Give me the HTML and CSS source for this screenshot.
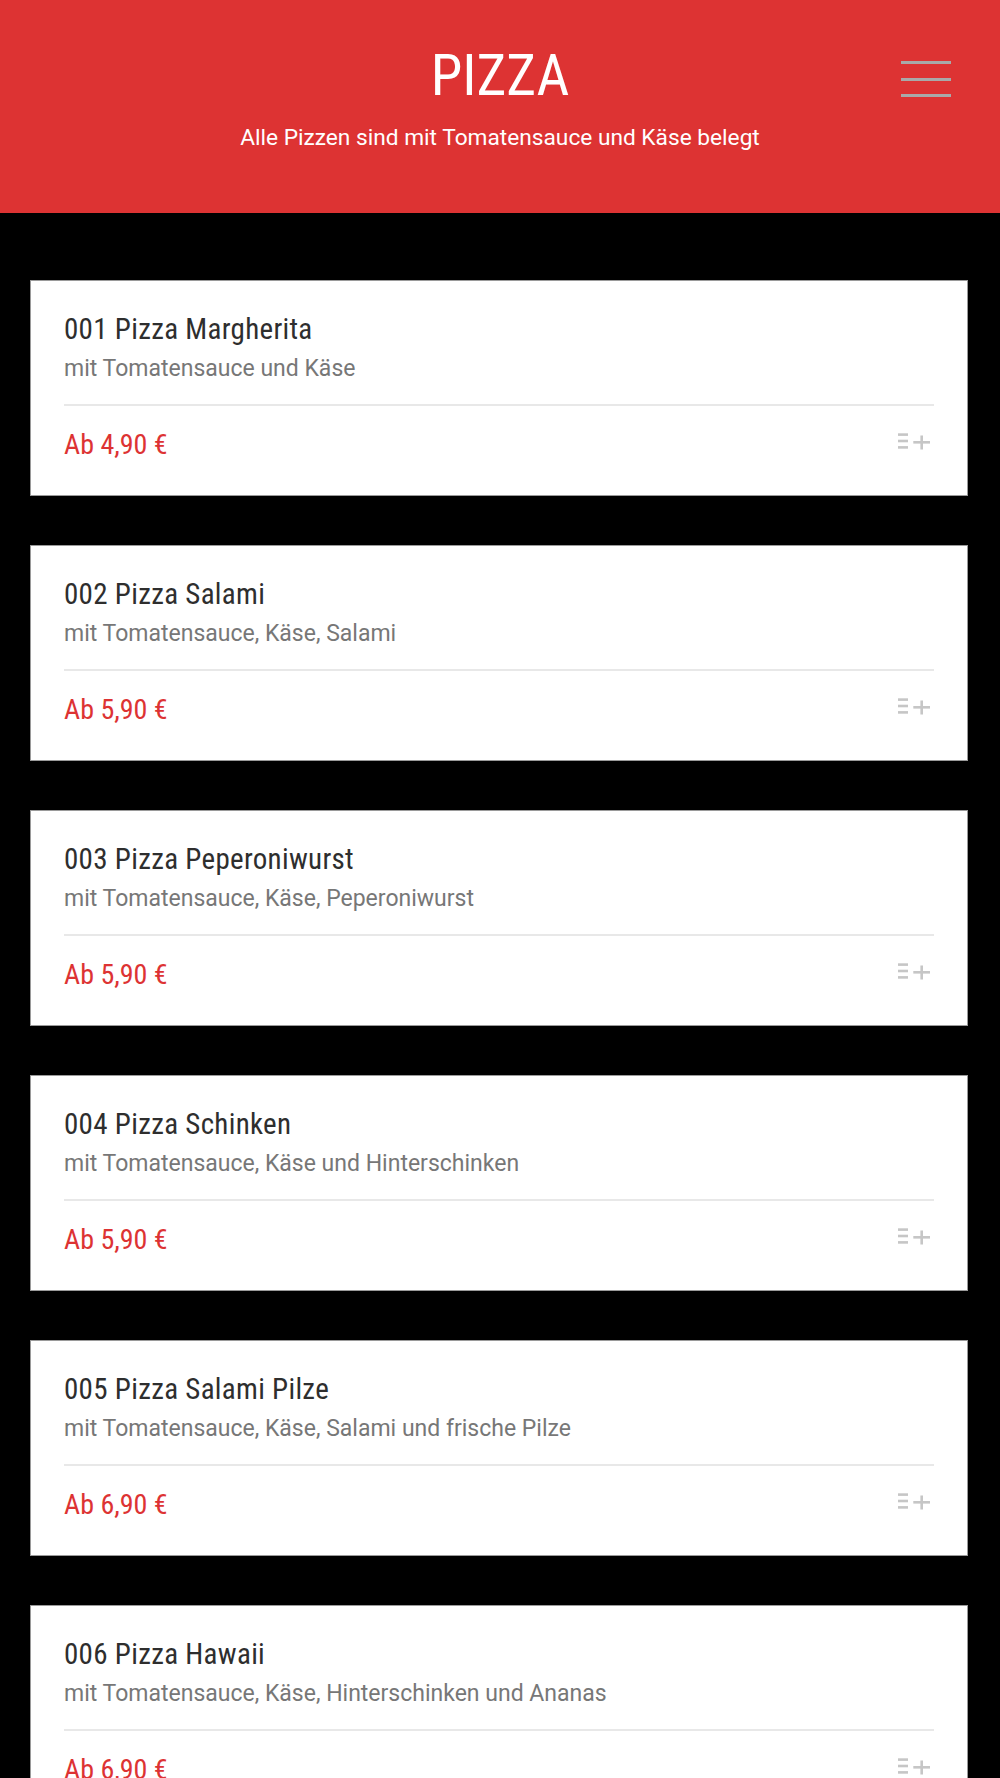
FILE: index.html
```html
<!DOCTYPE html>
<html lang="de">
<head>
<meta charset="utf-8">
<title>Pizza</title>
<link rel="stylesheet" href="styles.css">
</head>
<body>
<header class="hero">
  <h1 class="hero-title">PIZZA</h1>
  <p class="hero-sub">Alle Pizzen sind mit Tomatensauce und Käse belegt</p>
  <button class="menu-btn" aria-label="Menü"><span></span><span></span><span></span></button>
</header>
<main class="list">
  <article class="card">
    <h2 class="card-title">001 Pizza Margherita</h2>
    <p class="card-desc">mit Tomatensauce und Käse</p>
    <div class="card-foot"><span class="price">Ab 4,90 €</span><svg class="add" width="32" height="17" viewBox="0 0 32 17"><rect x="0" y="0.3" width="10" height="2.6"/><rect x="0" y="6.7" width="10" height="2.6"/><rect x="0" y="13.1" width="10" height="2.6"/><rect x="15.3" y="8" width="16.7" height="2.6"/><rect x="22.4" y="2.5" width="2.6" height="14"/></svg></div>
  </article>
  <article class="card">
    <h2 class="card-title">002 Pizza Salami</h2>
    <p class="card-desc">mit Tomatensauce, Käse, Salami</p>
    <div class="card-foot"><span class="price">Ab 5,90 €</span><svg class="add" width="32" height="17" viewBox="0 0 32 17"><rect x="0" y="0.3" width="10" height="2.6"/><rect x="0" y="6.7" width="10" height="2.6"/><rect x="0" y="13.1" width="10" height="2.6"/><rect x="15.3" y="8" width="16.7" height="2.6"/><rect x="22.4" y="2.5" width="2.6" height="14"/></svg></div>
  </article>
  <article class="card">
    <h2 class="card-title">003 Pizza Peperoniwurst</h2>
    <p class="card-desc">mit Tomatensauce, Käse, Peperoniwurst</p>
    <div class="card-foot"><span class="price">Ab 5,90 €</span><svg class="add" width="32" height="17" viewBox="0 0 32 17"><rect x="0" y="0.3" width="10" height="2.6"/><rect x="0" y="6.7" width="10" height="2.6"/><rect x="0" y="13.1" width="10" height="2.6"/><rect x="15.3" y="8" width="16.7" height="2.6"/><rect x="22.4" y="2.5" width="2.6" height="14"/></svg></div>
  </article>
  <article class="card">
    <h2 class="card-title">004 Pizza Schinken</h2>
    <p class="card-desc">mit Tomatensauce, Käse und Hinterschinken</p>
    <div class="card-foot"><span class="price">Ab 5,90 €</span><svg class="add" width="32" height="17" viewBox="0 0 32 17"><rect x="0" y="0.3" width="10" height="2.6"/><rect x="0" y="6.7" width="10" height="2.6"/><rect x="0" y="13.1" width="10" height="2.6"/><rect x="15.3" y="8" width="16.7" height="2.6"/><rect x="22.4" y="2.5" width="2.6" height="14"/></svg></div>
  </article>
  <article class="card">
    <h2 class="card-title">005 Pizza Salami Pilze</h2>
    <p class="card-desc">mit Tomatensauce, Käse, Salami und frische Pilze</p>
    <div class="card-foot"><span class="price">Ab 6,90 €</span><svg class="add" width="32" height="17" viewBox="0 0 32 17"><rect x="0" y="0.3" width="10" height="2.6"/><rect x="0" y="6.7" width="10" height="2.6"/><rect x="0" y="13.1" width="10" height="2.6"/><rect x="15.3" y="8" width="16.7" height="2.6"/><rect x="22.4" y="2.5" width="2.6" height="14"/></svg></div>
  </article>
  <article class="card">
    <h2 class="card-title">006 Pizza Hawaii</h2>
    <p class="card-desc">mit Tomatensauce, Käse, Hinterschinken und Ananas</p>
    <div class="card-foot"><span class="price">Ab 6,90 €</span><svg class="add" width="32" height="17" viewBox="0 0 32 17"><rect x="0" y="0.3" width="10" height="2.6"/><rect x="0" y="6.7" width="10" height="2.6"/><rect x="0" y="13.1" width="10" height="2.6"/><rect x="15.3" y="8" width="16.7" height="2.6"/><rect x="22.4" y="2.5" width="2.6" height="14"/></svg></div>
  </article>
</main>
</body>
</html>
```

FILE: styles.css
```css
* { box-sizing: border-box; }
html, body {
  margin: 0;
  padding: 0;
  background: #000;
  font-family: Roboto, "Noto Sans", Arial, sans-serif;
}
.hero {
  position: relative;
  height: 213px;
  background: #dd3333;
  padding: 45px 0 0;
  text-align: center;
  color: #fff;
}
.hero-title {
  margin: 0;
  font-family: "Roboto Condensed", Roboto, sans-serif;
  font-stretch: condensed;
  font-weight: 400;
  font-size: 57px;
  line-height: 62px;
}
.hero-sub {
  margin: 16px 0 0;
  font-size: 22.7px;
  line-height: 30px;
}
.menu-btn {
  position: absolute;
  top: 61px;
  right: 49px;
  width: 50px;
  height: 36px;
  padding: 0;
  border: 0;
  background: transparent;
  display: flex;
  flex-direction: column;
  justify-content: space-between;
}
.menu-btn span {
  display: block;
  height: 3px;
  width: 100%;
  background: #a9a9a9;
}
.list {
  padding: 67px 32px 40px 30px;
  display: flex;
  flex-direction: column;
  gap: 49px;
}
.card {
  background: #fff;
  border: 1px solid #9a9a9a;
  padding: 32px 33px 34px 33px;
  height: 216px;
}
.card-title {
  margin: 0;
  font-family: "Roboto Condensed", Roboto, sans-serif;
  font-stretch: condensed;
  font-weight: 400;
  font-size: 29px;
  letter-spacing: 0.3px;
  line-height: 32px;
  color: #2e2e2e;
}
.card-desc {
  margin: 9px 0 0;
  font-size: 23px;
  line-height: 30px;
  color: #777;
  padding-bottom: 20px;
  border-bottom: 2px solid #e8e8e8;
}
.card-foot {
  display: flex;
  justify-content: space-between;
  align-items: flex-start;
  padding-top: 23px;
}
.price {
  font-family: "Roboto Condensed", Roboto, sans-serif;
  font-stretch: condensed;
  font-size: 28px;
  line-height: 32px;
  color: #dd3333;
}
.add {
  margin: 4px 4px 0 0;
  fill: #c6c6c6;
}
```
